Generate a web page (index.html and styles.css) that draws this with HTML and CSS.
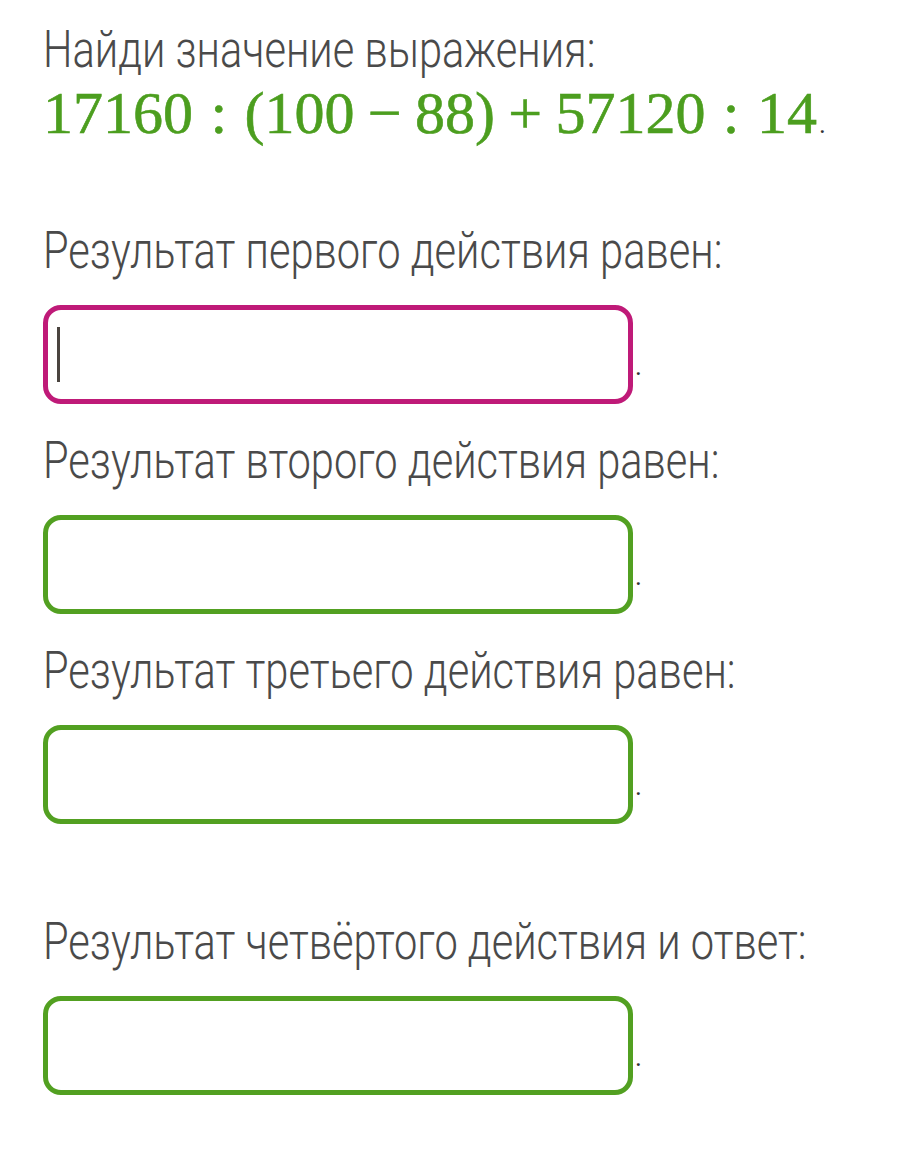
FILE: index.html
```html
<!DOCTYPE html>
<html lang="ru">
<head>
<meta charset="utf-8">
<link rel="stylesheet" href="styles.css">
</head>
<body>
<div class="page">
  <div class="text title"><span class="sq">Найди значение выражения:</span></div>
  <div class="math"><span class="expr">17160<span class="rel">:</span>(100<span class="bin">−</span>88)<span class="bin">+</span>57120<span class="rel">:</span>14</span><span class="mdot">.</span></div>

  <div class="text label first"><span class="sq">Результат первого действия равен:</span></div>
  <div class="row"><div class="box active"><span class="caret"></span></div><span class="dot">.</span></div>

  <div class="text label"><span class="sq">Результат второго действия равен:</span></div>
  <div class="row"><div class="box"></div><span class="dot">.</span></div>

  <div class="text label"><span class="sq">Результат третьего действия равен:</span></div>
  <div class="row"><div class="box"></div><span class="dot">.</span></div>

  <div class="text label last"><span class="sq">Результат четвёртого действия и ответ:</span></div>
  <div class="row"><div class="box"></div><span class="dot">.</span></div>
</div>
</body>
</html>
```
FILE: styles.css
```css
html, body {
  margin: 0;
  padding: 0;
  background: #ffffff;
  overflow: hidden;
}
.page {
  padding: 20px 43px 0 43px;
}
.text {
  font-family: Roboto, "Liberation Sans", sans-serif;
  font-weight: 300;
  font-size: 52px;
  line-height: 60px;
  height: 60px;
  color: #4a4a4a;
  white-space: nowrap;
  overflow: hidden;
}
.sq {
  display: inline-block;
  transform: scaleX(0.8);
  transform-origin: left center;
}
.math {
  font-family: "Liberation Serif", "Times New Roman", serif;
  font-size: 60px;
  line-height: 66px;
  height: 66px;
  color: #4c9e1f;
  white-space: nowrap;
  -webkit-text-stroke: 0.6px #4c9e1f;
}
.rel {
  margin: 0 0.29em;
}
.bin {
  margin: 0 0.2222em;
}
.mdot {
  font-family: Roboto, sans-serif;
  font-size: 26px;
  color: #333;
  -webkit-text-stroke: 0;
  margin-left: 2px;
}
.label.first {
  margin-top: 75px;
}
.label {
  margin-top: 27px;
}
.label.last {
  margin-top: 88px;
}
.row {
  display: flex;
  align-items: flex-end;
  margin-top: 24px;
}
.box {
  box-sizing: border-box;
  width: 590px;
  height: 99px;
  border: 5px solid #52a021;
  border-radius: 18px;
  display: flex;
  align-items: center;
  padding-left: 9px;
}
.box.active {
  border-color: #bf1a78;
}
.caret {
  width: 3px;
  height: 55px;
  background: #4a443f;
}
.dot {
  font-family: Roboto, sans-serif;
  font-size: 26px;
  line-height: 26px;
  color: #333;
  margin-left: 2px;
  padding-bottom: 25px;
}
```
